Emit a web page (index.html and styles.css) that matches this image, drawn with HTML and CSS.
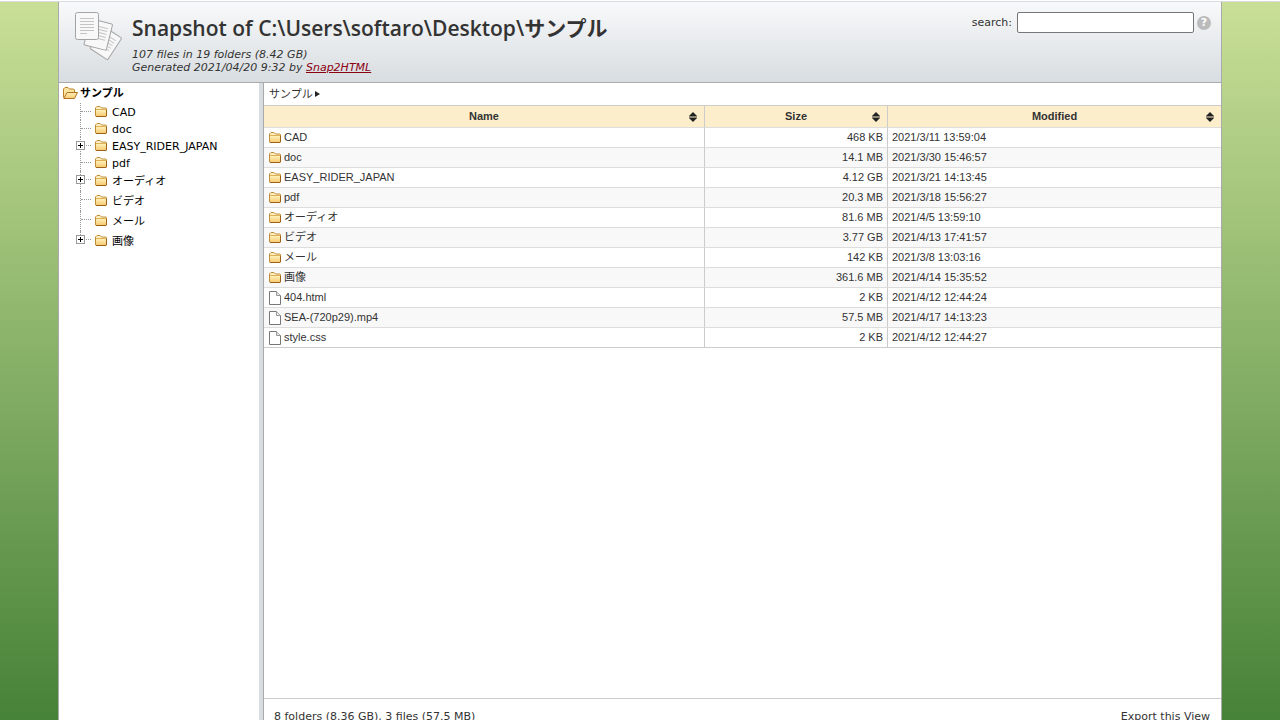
FILE: index.html
```html
<!DOCTYPE html>
<html lang="ja">
<head>
<meta charset="utf-8">
<title>Snapshot of C:\Users\softaro\Desktop\サンプル</title>
<link rel="stylesheet" href="styles.css">
</head>
<body>
<svg class="defs" width="0" height="0" aria-hidden="true">
  <defs>
    <linearGradient id="fold" x1="0" y1="0" x2="0" y2="1">
      <stop offset="0" stop-color="#fff0b8"/><stop offset="1" stop-color="#f7cb74"/>
    </linearGradient>
    <symbol id="folder" viewBox="0 0 12 11">
      <path d="M.5 10V2L2 .5h3L6.500 2H11l.5.500V10l-.5.500H1z" fill="#fdf0c4" stroke="#c08c36"/>
      <path d="M1 4h10v6H1z" fill="url(#fold)"/>
      <path d="M1 3.500h10" stroke="#e0b056"/>
      <path d="M1 10.500h10l.5-.5V4" fill="none" stroke="#9c6218"/>
    </symbol>
    <symbol id="folder-open" viewBox="0 0 15 12">
      <path d="M.5 10.500V2L2 .5h3L6.500 2h4l1 1v2" fill="#fbe3a0" stroke="#b98124"/>
      <path d="M.8 11.500L4 5.500h10.500l-3 6z" fill="url(#fold)" stroke="#b07420"/>
    </symbol>
    <symbol id="file" viewBox="0 0 12 14">
      <path d="M.5.500h7l4 4v9H.500z" fill="#fff" stroke="#777"/>
      <path d="M7.500.500v4h4" fill="#e8e8e8" stroke="#999"/>
    </symbol>
    <symbol id="sort" viewBox="0 0 8 10">
      <path d="M4 0l4 4v.5H0V4zM4 10l4-4v-.5H0V6z" fill="#222"/>
    </symbol>
  </defs>
</svg>
<div class="page">
  <header class="header">
    <svg class="logo" viewBox="0 0 48 49" aria-hidden="true">
      <g stroke="#a3a3a3" fill="#f8f8f8">
        <g transform="translate(29 14) rotate(33)"><rect width="21" height="26" x=".5" y=".5" rx="1"/><path d="M5 6h13M5 9h13M5 12h13M5 15h13M5 18h13" stroke="#c4c4c4"/></g>
        <g transform="translate(15 6) rotate(14)"><rect width="23" height="27" x=".5" y=".5" rx="1"/><path d="M5 6h15M5 9h15M5 12h15M5 15h15M5 18h15" stroke="#c4c4c4"/></g>
        <rect x=".5" y=".5" width="23" height="27" rx="2"/>
        <path d="M5 6.500h14M5 9.500h14M5 12.500h14M5 15.500h14M5 18.500h14M5 21.500h7" stroke="#c4c4c4"/>
      </g>
    </svg>
    <div class="heading">
      <h1>Snapshot of C:\Users\softaro\Desktop\サンプル</h1>
      <p>107 files in 19 folders (8.42 GB)<br>Generated 2021/04/20 9:32 by <a href="#">Snap2HTML</a></p>
    </div>
    <form class="search">
      <label for="q">search:</label>
      <input id="q" type="text">
      <button type="button" class="help" aria-label="Help">?</button>
    </form>
  </header>
  <div class="content">
    <nav class="tree">
      <div class="root"><svg class="open"><use href="#folder-open"/></svg>サンプル</div>
      <ul>
        <li><svg class="folder"><use href="#folder"/></svg><span>CAD</span></li>
        <li><svg class="folder"><use href="#folder"/></svg><span>doc</span></li>
        <li><button type="button" class="expand" aria-label="Expand EASY_RIDER_JAPAN"></button><svg class="folder"><use href="#folder"/></svg><span>EASY_RIDER_JAPAN</span></li>
        <li><svg class="folder"><use href="#folder"/></svg><span>pdf</span></li>
        <li class="cjk"><button type="button" class="expand" aria-label="Expand オーディオ"></button><svg class="folder"><use href="#folder"/></svg><span>オーディオ</span></li>
        <li class="cjk"><svg class="folder"><use href="#folder"/></svg><span>ビデオ</span></li>
        <li class="cjk"><svg class="folder"><use href="#folder"/></svg><span>メール</span></li>
        <li class="cjk"><button type="button" class="expand" aria-label="Expand 画像"></button><svg class="folder"><use href="#folder"/></svg><span>画像</span></li>
      </ul>
    </nav>
    <main class="list">
      <div class="crumbs">サンプル<svg viewBox="0 0 5 6"><path d="M0 0l5 3-5 3z" fill="#222"/></svg></div>
      <table>
        <colgroup><col class="c-name"><col class="c-size"><col class="c-date"></colgroup>
        <thead><tr>
          <th><div>Name<svg><use href="#sort"/></svg></div></th>
          <th><div>Size<svg><use href="#sort"/></svg></div></th>
          <th><div>Modified<svg><use href="#sort"/></svg></div></th>
        </tr></thead>
        <tbody>
          <tr><td><div><svg class="folder"><use href="#folder"/></svg>CAD</div></td><td>468 KB</td><td>2021/3/11 13:59:04</td></tr>
          <tr><td><div><svg class="folder"><use href="#folder"/></svg>doc</div></td><td>14.1 MB</td><td>2021/3/30 15:46:57</td></tr>
          <tr><td><div><svg class="folder"><use href="#folder"/></svg>EASY_RIDER_JAPAN</div></td><td>4.12 GB</td><td>2021/3/21 14:13:45</td></tr>
          <tr><td><div><svg class="folder"><use href="#folder"/></svg>pdf</div></td><td>20.3 MB</td><td>2021/3/18 15:56:27</td></tr>
          <tr><td><div><svg class="folder"><use href="#folder"/></svg>オーディオ</div></td><td>81.6 MB</td><td>2021/4/5 13:59:10</td></tr>
          <tr><td><div><svg class="folder"><use href="#folder"/></svg>ビデオ</div></td><td>3.77 GB</td><td>2021/4/13 17:41:57</td></tr>
          <tr><td><div><svg class="folder"><use href="#folder"/></svg>メール</div></td><td>142 KB</td><td>2021/3/8 13:03:16</td></tr>
          <tr><td><div><svg class="folder"><use href="#folder"/></svg>画像</div></td><td>361.6 MB</td><td>2021/4/14 15:35:52</td></tr>
          <tr><td><div><svg class="file"><use href="#file"/></svg>404.html</div></td><td>2 KB</td><td>2021/4/12 12:44:24</td></tr>
          <tr><td><div><svg class="file"><use href="#file"/></svg>SEA-(720p29).mp4</div></td><td>57.5 MB</td><td>2021/4/17 14:13:23</td></tr>
          <tr><td><div><svg class="file"><use href="#file"/></svg>style.css</div></td><td>2 KB</td><td>2021/4/12 12:44:27</td></tr>
        </tbody>
      </table>
      <footer class="status"><span>8 folders (8.36 GB), 3 files (57.5 MB)</span><a href="#">Export this View</a></footer>
    </main>
  </div>
</div>
</body>
</html>
```
FILE: styles.css
```css
* { box-sizing: border-box; }
html {
  height: 100%;
  padding-top: 1px;
  overflow: hidden;
  background: #fff;
}
body {
  height: 100%;
  margin: 0;
  padding: 0 58px;
  border-top: 1px solid #d8dce0;
  background: linear-gradient(#c9df97, #468238);
  font: 11px/13px "DejaVu Sans", "Noto Sans CJK JP", sans-serif;
  color: #333;
}
.defs { position: absolute; }
svg { display: block; flex: none; }
.page {
  display: flex;
  flex-direction: column;
  height: calc(100% + 18px);
  border: solid #aaa;
  border-width: 0 1px;
  background: #fff;
}
.header {
  display: flex;
  height: 81px;
  flex: none;
  padding: 10px 10px 0 16px;
  border-bottom: 1px solid #aaa;
  background: linear-gradient(#f8f9fa, #d8dde1);
}
.logo { width: 48px; height: 49px; }
.heading { flex: 1; padding-left: 9px; }
h1 {
  margin: 0;
  font: 600 21px/32px "Open Sans", "Noto Sans CJK JP", sans-serif;
}
p { margin: 4px 0 0; font-style: italic; }
.heading a { color: #8b0010; }
.search { display: flex; align-items: center; height: 21px; }
.search input {
  width: 177px;
  height: 21px;
  margin: 0 3px 0 5px;
  border: 1px solid #767676;
  border-radius: 2px;
}
.help {
  width: 14px;
  height: 14px;
  padding: 0;
  border: 0;
  border-radius: 50%;
  background: #bbb;
  color: #fff;
  font: bold 11px/14px "DejaVu Sans", sans-serif;
}
.content { display: flex; flex: 1; min-height: 0; }
.tree { flex: none; width: 200px; padding-left: 4px; color: #000; }
.root { display: flex; align-items: center; gap: 2px; height: 20px; font-weight: bold; }
.open { width: 15px; height: 12px; }
.folder { width: 12px; height: 11px; }
.file { width: 12px; height: 14px; }
ul { margin: 0; padding: 0 0 0 17px; list-style: none; }
li {
  position: relative;
  display: flex;
  align-items: center;
  gap: 5px;
  height: 17px;
  padding-left: 15px;
}
li span { padding-top: 1px; }
li.cjk { height: 20px; padding-bottom: 2px; }
li.cjk span { padding-top: 2px; }
li::before {
  content: "";
  position: absolute;
  left: 0;
  top: 0;
  bottom: 0;
  border-left: 1px dotted #999;
}
li:last-child::before { bottom: 50%; }
li::after {
  content: "";
  position: absolute;
  left: 1px;
  top: 8px;
  width: 10px;
  border-top: 1px dotted #999;
}
.expand {
  position: absolute;
  z-index: 1;
  left: -4px;
  top: 4px;
  width: 9px;
  height: 9px;
  padding: 0;
  border: 1px solid #999;
  background:
    linear-gradient(#000, #000) center / 5px 1px no-repeat,
    linear-gradient(#000, #000) center / 1px 5px no-repeat,
    #fff;
}
.list {
  display: flex;
  flex-direction: column;
  flex: 1;
  min-width: 0;
  border-left: 4px solid #d8dde1;
  box-shadow: inset 1px 0 #aaa;
  padding-left: 1px;
}
.crumbs { display: flex; align-items: center; gap: 2px; height: 22px; padding-left: 5px; }
.crumbs svg { width: 5px; height: 6px; }
table {
  width: 100%;
  border-collapse: separate;
  border-spacing: 0;
  table-layout: fixed;
  border-top: 1px solid #ccc;
  border-bottom: 1px solid #ccc;
  font: 11px/13px "Liberation Sans", "Noto Sans CJK JP", sans-serif;
}
.c-name { width: 441px; }
.c-size { width: 183px; }
th, td { padding: 0 4px; border-right: 1px solid #ccc; }
th:last-child, td:last-child { border-right: 0; }
th { height: 22px; background: #fdeecb; border-bottom: 1px solid #ddd; }
th div {
  display: grid;
  grid-template-columns: 1fr 8px;
  align-items: center;
  padding: 0 3px 0 11px;
}
th svg { width: 8px; height: 10px; }
td { height: 20px; border-bottom: 1px solid #ddd; white-space: nowrap; }
td:first-child { padding-left: 5px; }
td div { display: flex; align-items: center; gap: 3px; }
td:nth-child(2) { text-align: right; }
tr:nth-child(even) td { background: #f8f8f8; }
tbody tr:last-child td { height: 19px; border-bottom: 0; }
.status {
  display: flex;
  justify-content: space-between;
  margin-top: auto;
  padding: 11px 11px 15px 10px;
  border-top: 1px solid #ccc;
}
.status a { color: inherit; text-decoration: none; }
```
